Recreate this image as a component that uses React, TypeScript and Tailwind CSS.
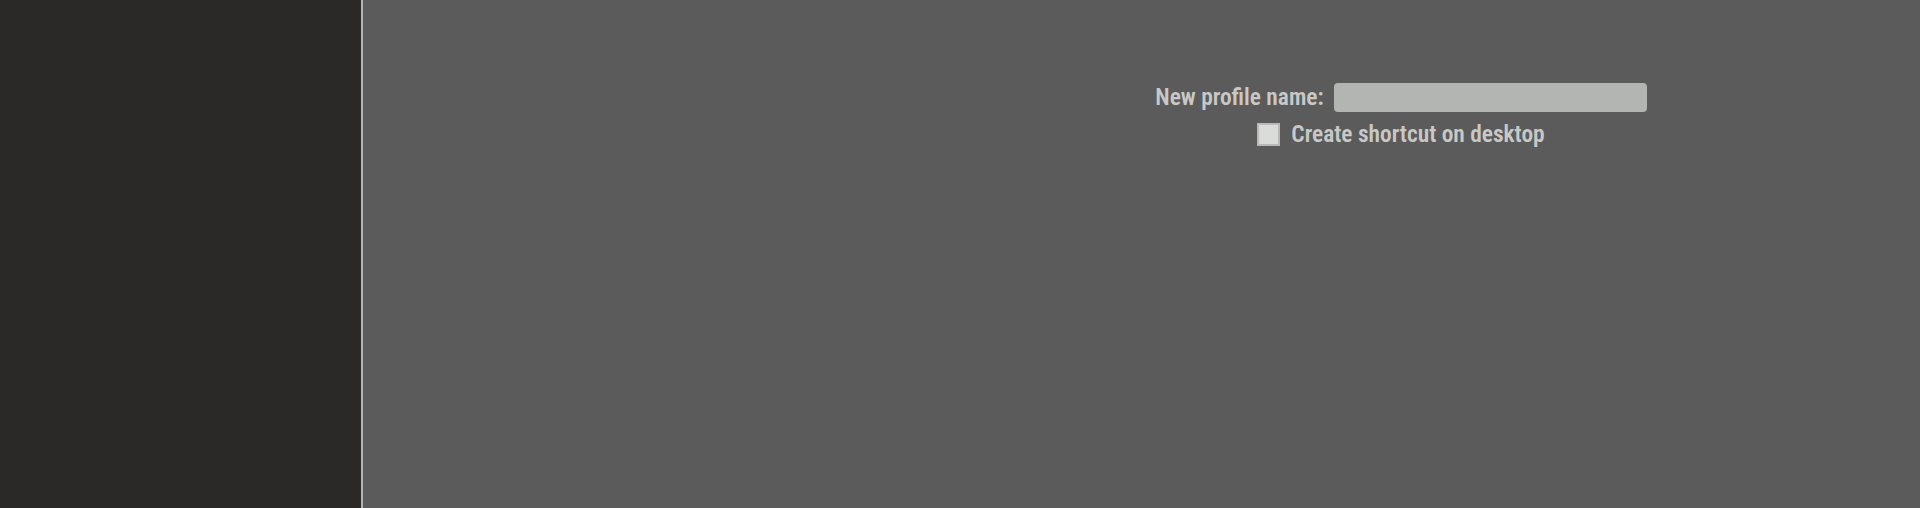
import React, { useState } from 'react';

export default function App() {
    const [name, setName] = useState('');
    const [shortcut, setShortcut] = useState(false);

    return (
        <div className="flex h-[508px] w-[1920px] overflow-hidden font-[Roboto,sans-serif] font-stretch-condensed">
            <aside className="h-full w-[361px] shrink-0 bg-[#2a2927]" />
            <div className="h-full w-[2px] shrink-0 bg-[#b4b4b4]" />
            <main className="flex h-full flex-1 bg-[#5b5b5b] pl-[519px]">
                <div className="flex flex-1 flex-col items-center pt-[83px]">
                    <div className="flex items-center gap-[10px]">
                        <label className="text-[23.4px] leading-[29px] font-semibold text-[#c8c9c7]">New profile name:</label>
                        <input
                            value={name}
                            onChange={e => setName(e.target.value)}
                            className="h-[29px] w-[313px] rounded-[4px] bg-[#b3b5b3] px-2 text-[18px] text-[#333] outline-none"
                        />
                    </div>
                    <label className="mt-[8px] flex cursor-pointer items-center gap-[11px]">
                        <span
                            onClick={() => setShortcut(!shortcut)}
                            className="flex h-[23px] w-[23px] items-center justify-center border-2 border-[#b9bab8] bg-[#dadcda] text-[16px] text-[#333]"
                        >
                            {shortcut ? '✓' : ''}
                        </span>
                        <span className="text-[23.4px] leading-[29px] font-semibold text-[#c8c9c7]">Create shortcut on desktop</span>
                    </label>
                </div>
            </main>
        </div>
    );
}
